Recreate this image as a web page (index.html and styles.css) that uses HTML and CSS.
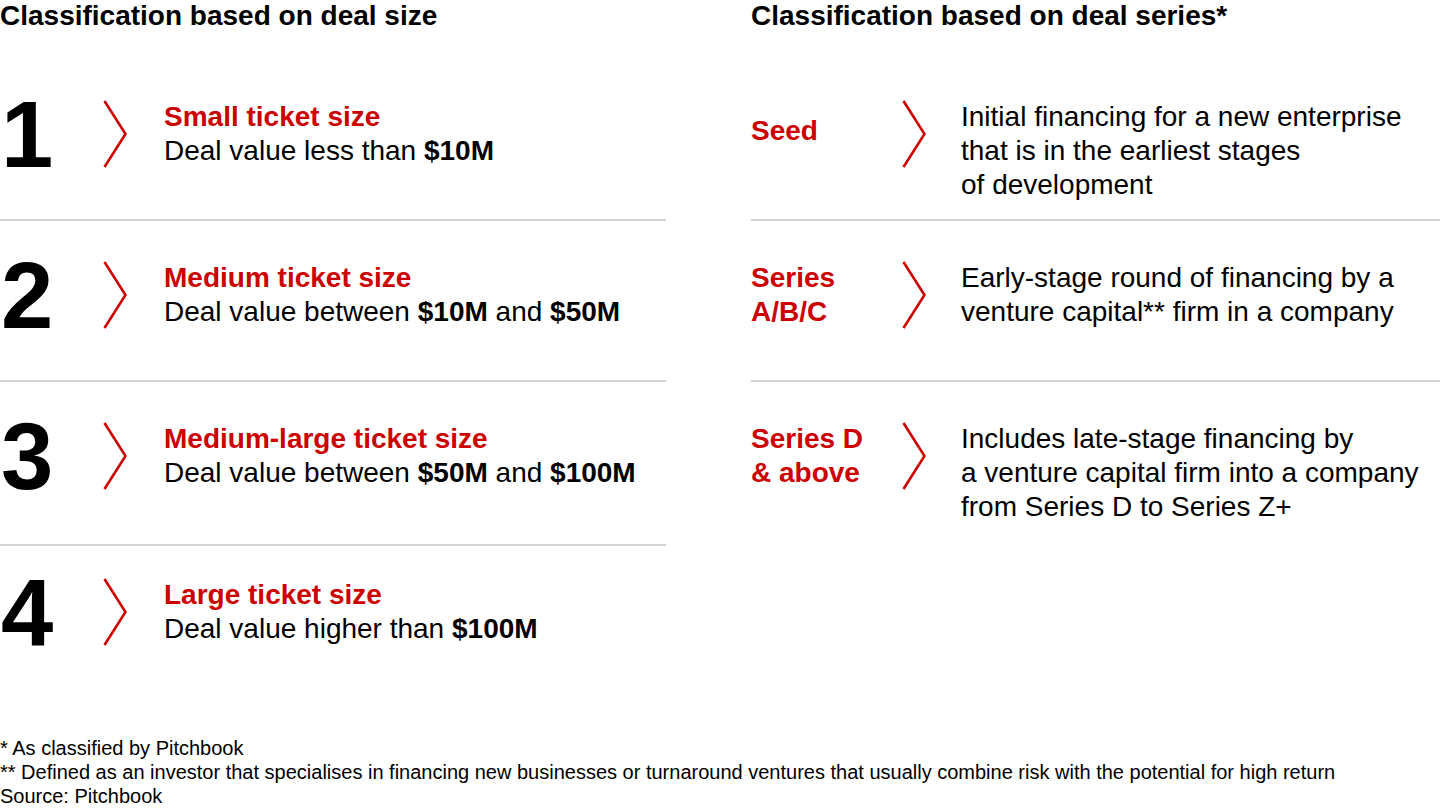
FILE: index.html
```html
<!DOCTYPE html>
<html lang="en">
<head>
<meta charset="utf-8">
<title>Deal classification</title>
<link rel="stylesheet" href="styles.css">
</head>
<body>
<div class="page">
  <div class="board">
    <h2 class="heading">Classification based on deal size</h2>
    <h2 class="heading">Classification based on deal series*</h2>

    <div class="row">
      <div class="num">1</div>
      <svg class="chev" width="24" height="68" viewBox="0 0 24 68"><polyline points="1.5,1 22.5,34 1.5,67"/></svg>
      <div class="text"><div class="title">Small ticket size</div><div>Deal value less than <b>$10M</b></div></div>
    </div>
    <div class="row">
      <div class="label"><span class="label-seed">Seed</span></div>
      <svg class="chev" width="24" height="68" viewBox="0 0 24 68"><polyline points="1.5,1 22.5,34 1.5,67"/></svg>
      <div class="text text-series">Initial financing for a new enterprise<br>that is in the earliest stages<br>of development</div>
    </div>

    <div class="row">
      <div class="num">2</div>
      <svg class="chev" width="24" height="68" viewBox="0 0 24 68"><polyline points="1.5,1 22.5,34 1.5,67"/></svg>
      <div class="text"><div class="title">Medium ticket size</div><div>Deal value between <b>$10M</b> and <b>$50M</b></div></div>
    </div>
    <div class="row">
      <div class="label"><span>Series<br>A/B/C</span></div>
      <svg class="chev" width="24" height="68" viewBox="0 0 24 68"><polyline points="1.5,1 22.5,34 1.5,67"/></svg>
      <div class="text text-series">Early-stage round of financing by a<br>venture capital** firm in a company</div>
    </div>

    <div class="row">
      <div class="num">3</div>
      <svg class="chev" width="24" height="68" viewBox="0 0 24 68"><polyline points="1.5,1 22.5,34 1.5,67"/></svg>
      <div class="text"><div class="title">Medium-large ticket size</div><div>Deal value between <b>$50M</b> and <b>$100M</b></div></div>
    </div>
    <div class="row row-open">
      <div class="label"><span>Series D<br>&amp; above</span></div>
      <svg class="chev" width="24" height="68" viewBox="0 0 24 68"><polyline points="1.5,1 22.5,34 1.5,67"/></svg>
      <div class="text text-series">Includes late-stage financing by<br>a venture capital firm into a company<br>from Series D to Series Z+</div>
    </div>

    <div class="row row-last">
      <div class="num">4</div>
      <svg class="chev" width="24" height="68" viewBox="0 0 24 68"><polyline points="1.5,1 22.5,34 1.5,67"/></svg>
      <div class="text"><div class="title">Large ticket size</div><div>Deal value higher than <b>$100M</b></div></div>
    </div>
  </div>

  <div class="notes">
    <p>* As classified by Pitchbook</p>
    <p>** Defined as an investor that specialises in financing new businesses or turnaround ventures that usually combine risk with the potential for high return</p>
    <p>Source: Pitchbook</p>
  </div>
</div>
</body>
</html>
```
FILE: styles.css
```css
html, body {
  margin: 0;
  padding: 0;
  background: #ffffff;
}

body {
  font-family: "Liberation Sans", Arial, sans-serif;
  color: #000000;
}

.page {
  width: 1440px;
  height: 810px;
  overflow: hidden;
}

.board {
  display: grid;
  grid-template-columns: 666px 689px;
  grid-template-rows: 60px 161px 161px 164px 130px;
  column-gap: 85px;
}

.heading {
  margin: 0;
  font-size: 28px;
  line-height: 32px;
  font-weight: 700;
}

.row {
  display: flex;
  align-items: flex-start;
  padding-top: 40px;
  border-bottom: 2px solid #d4d4d4;
  box-sizing: border-box;
}

.row-open {
  border-bottom: none;
}

.row-last {
  border-bottom: none;
  padding-top: 32px;
}

.num {
  width: 103px;
  flex: none;
  font-size: 94px;
  line-height: 70px;
  font-weight: 700;
  padding-left: 1px;
  box-sizing: border-box;
}

.chev {
  flex: none;
  display: block;
}

.chev polyline {
  fill: none;
  stroke: #cc0000;
  stroke-width: 2.6;
}

.text {
  margin-left: 37px;
  font-size: 28px;
  line-height: 34px;
}

.text-series {
  margin-left: 35px;
}

.title {
  color: #cc0000;
  font-weight: 700;
}

.label {
  width: 151px;
  height: 68px;
  flex: none;
  display: flex;
  align-items: center;
  color: #cc0000;
  font-weight: 700;
  font-size: 28px;
  line-height: 34px;
}

.label-seed {
  margin-top: -7px;
}

.notes {
  margin-top: 60px;
  font-size: 20px;
  line-height: 24px;
}

.notes p {
  margin: 0;
}
```
